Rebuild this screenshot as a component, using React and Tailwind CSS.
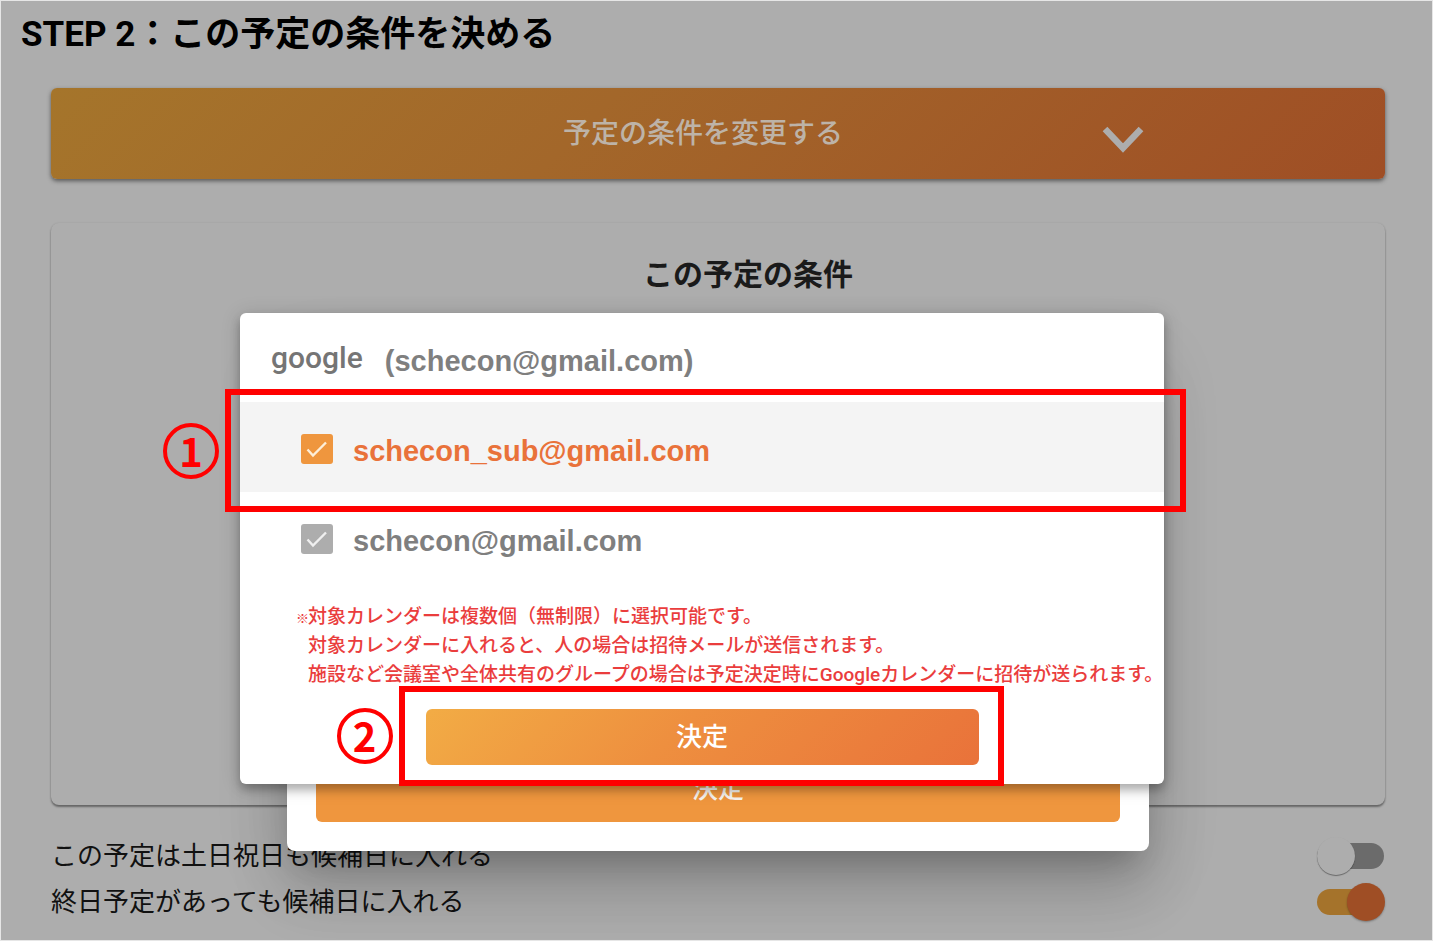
import React from "react";

function StepMark({ digit, className }) {
  return (
    <span
      className={`absolute flex size-14 items-center justify-center rounded-full border-4 border-[#ff0000] pb-0.5 font-['Noto_Sans_CJK_JP',sans-serif] text-[40px] leading-none font-bold text-[#ff0000] ${className}`}
    >
      {digit}
    </span>
  );
}

function Highlight({ className }) {
  return (
    <div className={`pointer-events-none absolute border-6 border-[#ff0000] ${className}`} />
  );
}

function CalendarOption({ id, label, active, children }) {
  return (
    <div className={`relative flex h-[90px] items-center pt-1 pl-[61px] ${active ? "bg-[#f4f4f4]" : ""}`}>
      <span className="grid">
        <input
          id={id}
          type="checkbox"
          defaultChecked
          className={`col-start-1 row-start-1 h-[30px] w-8 appearance-none rounded-[3px] ${active ? "bg-[#ef963e]" : "bg-[#adadad]"}`}
        />
        <svg
          viewBox="0 0 32 30"
          className="pointer-events-none col-start-1 row-start-1 h-[30px] w-8"
          fill="none"
          stroke={active ? "#fdeed8" : "#efefef"}
          strokeWidth="2.4"
        >
          <path d="M6.5 15.5 L12 21.5 L25 8.5" />
        </svg>
      </span>
      <label
        htmlFor={id}
        className={`pt-1 pl-5 font-['Liberation_Sans',sans-serif] text-[29px] leading-8 font-bold ${active ? "text-[#e9723a]" : "text-[#7f7f7f]"}`}
      >
        {label}
      </label>
      {children}
    </div>
  );
}

function SwitchRow({ id, label, on }) {
  return (
    <div className="flex h-[46px] items-center justify-between">
      <label htmlFor={id} className="text-[26px] leading-[46px] whitespace-nowrap text-[#111]">
        {label}
      </label>
      <span className="grid w-[68px] items-center">
        <input
          id={id}
          type="checkbox"
          role="switch"
          defaultChecked={on}
          className={`col-start-1 row-start-1 h-[26px] w-[67px] appearance-none rounded-full ${on ? "bg-[#a5732b]" : "bg-[#6b6b6b]"}`}
        />
        <span
          className={`pointer-events-none col-start-1 row-start-1 size-[38px] rounded-full ${on ? "justify-self-end bg-[#9f4e25] shadow-[0_1px_2px_rgba(0,0,0,0.3)]" : "justify-self-start bg-[#adadad] shadow-[0_1px_1px_rgba(0,0,0,0.4)]"}`}
        />
      </span>
    </div>
  );
}

export default function App() {
  return (
    <main className="relative min-h-screen overflow-hidden border border-[#e6e6e6] bg-[#adadad] font-[Roboto,'Noto_Sans_CJK_JP',sans-serif]">
      <h1 className="pt-2.5 pl-5 text-[35px] leading-[48px] font-bold text-black">
        STEP 2：この予定の条件を決める
      </h1>

      <div className="pt-[29px] pr-[47px] pl-[50px]">
        <button
          type="button"
          className="relative flex h-[91px] w-full items-center justify-center rounded-md bg-linear-[135deg,#a5752b,#a3672a_40%,#9f4e25] pr-[30px] text-[28px] font-medium text-[#bdb3a8] shadow-[0_2px_4px_rgba(0,0,0,0.5)]"
        >
          予定の条件を変更する
          <svg
            viewBox="0 0 42 30"
            className="absolute top-[37px] right-[241px] h-[30px] w-[42px]"
            fill="none"
            stroke="#adadad"
            strokeWidth="6.5"
          >
            <path d="M3 4 L21 23 L39 4" />
          </svg>
        </button>

        <section className="mt-11 h-[582px] rounded-lg pt-[29px] pl-[60px] text-center shadow-[0_2px_2px_rgba(0,0,0,0.4),0_0_2px_rgba(0,0,0,0.1)]">
          <h2 className="text-[30px] leading-[46px] font-bold text-[#1a1a1a]">この予定の条件</h2>
        </section>

        <div className="pt-7">
          <SwitchRow id="holidays" label="この予定は土日祝日も候補日に入れる" />
          <SwitchRow id="allday" label="終日予定があっても候補日に入れる" on />
        </div>
      </div>

      <div className="absolute top-[350px] right-[47px] left-[50px] flex justify-center">
        <div className="flex h-[500px] w-[862px] items-end rounded-lg bg-white p-[29px] shadow-[0_20px_28px_-13px_rgba(0,0,0,0.2),0_40px_60px_2px_rgba(0,0,0,0.14),0_14px_70px_6px_rgba(0,0,0,0.12)]">
          <button
            type="button"
            className="h-[66px] w-full rounded-md bg-[#ef963e] text-[26px] font-medium text-[#f7f3ee]"
          >
            決定
          </button>
        </div>
      </div>

      <div className="absolute top-[312px] right-[47px] left-[50px] flex justify-center pr-8">
        <div
          role="dialog"
          aria-labelledby="account"
          className="w-[924px] rounded-md bg-white pb-[19px] shadow-[0_6px_10px_rgba(0,0,0,0.25),0_2px_20px_rgba(0,0,0,0.15)]"
        >
          <h2 id="account" className="flex h-[89px] items-center pl-[31px] text-[#7f7f7f]">
            <span className="text-[30px] leading-8 font-medium text-[#757575]">google</span>
            <span className="pt-1.5 pl-[22px] font-['Liberation_Sans',sans-serif] text-[29px] leading-8 font-bold">
              (schecon@gmail.com)
            </span>
          </h2>

          <CalendarOption id="sub" label="schecon_sub@gmail.com" active>
            <Highlight className="-top-[13px] -right-[22px] -bottom-5 -left-[15px]" />
            <StepMark digit="1" className="top-[21px] -left-[77px]" />
          </CalendarOption>
          <CalendarOption id="main" label="schecon@gmail.com" />

          <div className="pt-5 pl-14 text-[19px] leading-[29px] font-medium whitespace-nowrap text-[#ea3d3d]">
            <p className="flex items-baseline">
              <span className="w-3 text-[13px] leading-5 font-bold">※</span>
              対象カレンダーは複数個（無制限）に選択可能です。
            </p>
            <p className="pl-3">対象カレンダーに入れると、人の場合は招待メールが送信されます。</p>
            <p className="pl-3">
              施設など会議室や全体共有のグループの場合は予定決定時にGoogleカレンダーに招待が送られます。
            </p>
          </div>

          <div className="relative mx-auto mt-5 w-[553px]">
            <button
              type="button"
              className="h-14 w-full rounded-md bg-linear-[135deg,#f2ac45,#ee8f3f_45%,#e9723a] text-[26px] font-medium text-white"
            >
              決定
            </button>
            <Highlight className="-top-[23px] -right-[25px] -bottom-[21px] -left-[27px]" />
            <StepMark digit="2" className="-top-[1px] -left-[89px]" />
          </div>
        </div>
      </div>
    </main>
  );
}
